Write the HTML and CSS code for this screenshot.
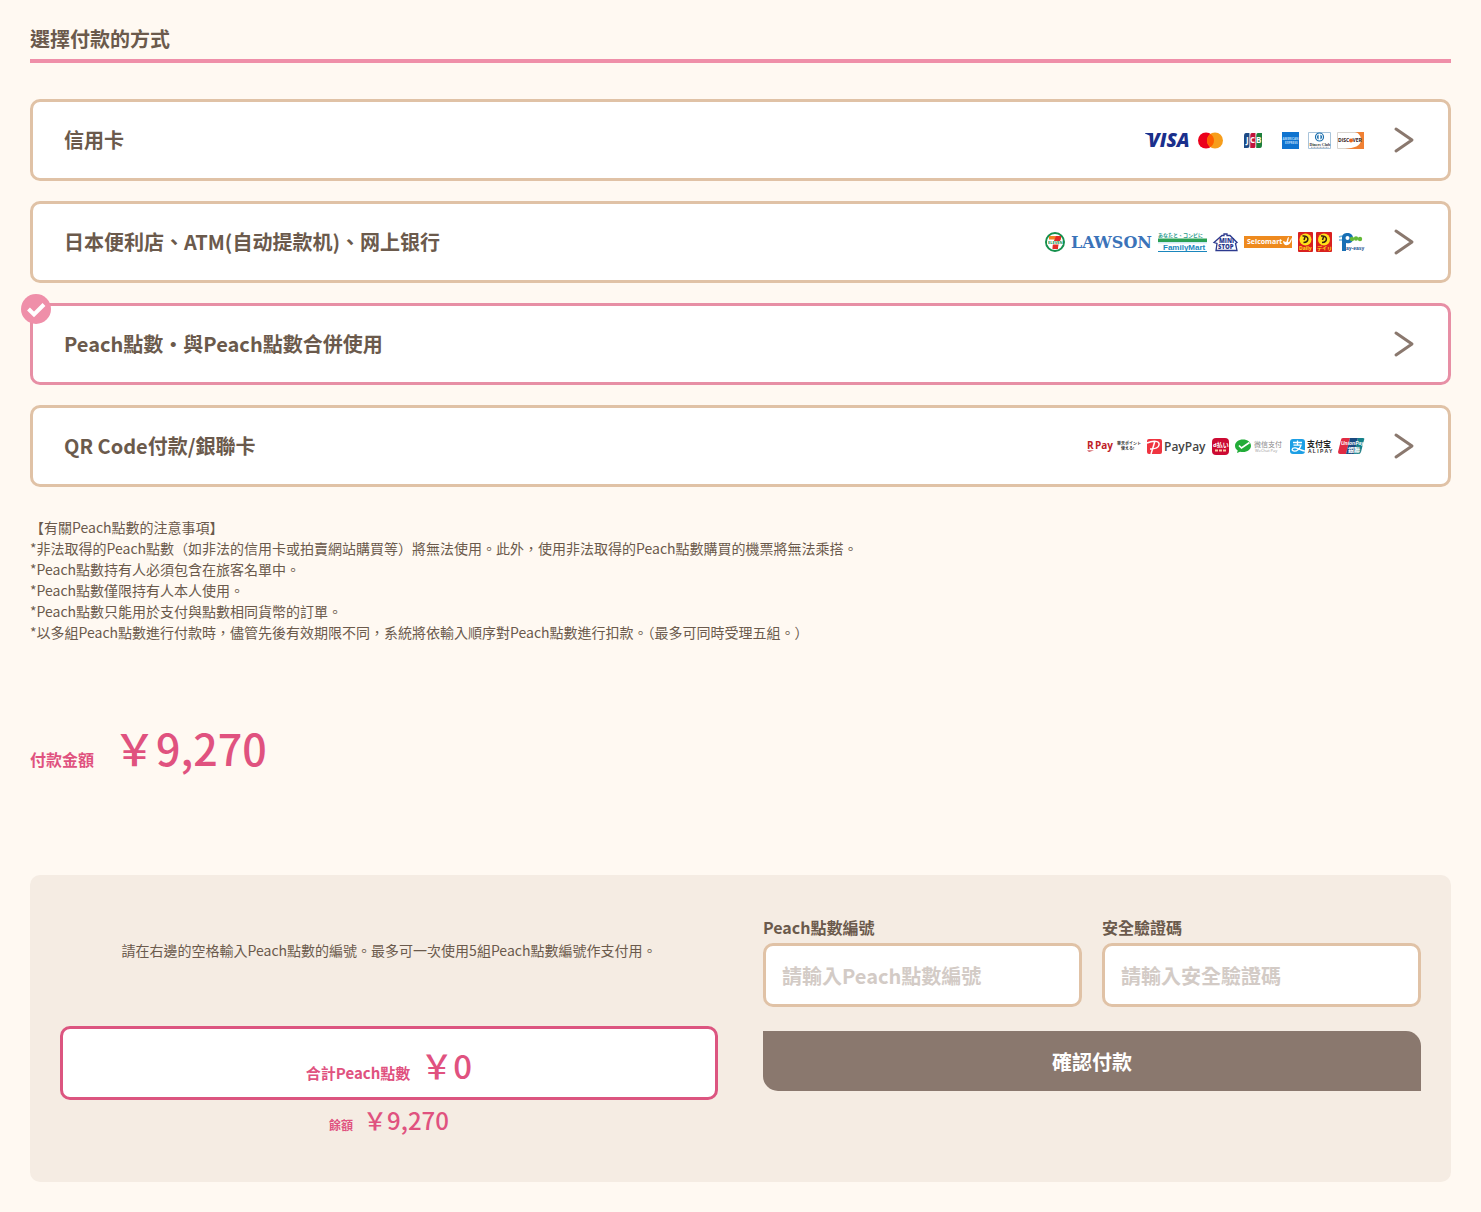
FILE: index.html
```html
<!DOCTYPE html>
<html lang="zh-Hant">
<head>
    <meta charset="UTF-8">
    <meta name="viewport" content="width=device-width, initial-scale=1.0">
    <title>選擇付款的方式</title>
    <link rel="stylesheet" href="styles.css">
</head>
<body>
    <main class="payment">
        <h1 class="page-title">選擇付款的方式</h1>

        <div class="methods">
            <button type="button" class="method">
                <span class="method-name">信用卡</span>
                <svg class="logos" width="219" height="20" viewBox="0 0 219 20" aria-hidden="true">
                    <!-- visa -->
                    <path d="M0 3h6q2 0 2 2v4Q5 5 0 3.600z" fill="#1a2f8c"/>
                    <text x="3" y="17" class="visa">VISA</text>
                    <!-- mastercard -->
                    <circle cx="61" cy="10.500" r="8" fill="#eb001b"/>
                    <circle cx="70" cy="10.500" r="8" fill="#f79e1b"/>
                    <path d="M65.500 3.900a8 8 0 0 1 0 13.200a8 8 0 0 1 0-13.200z" fill="#ff5f00"/>
                    <!-- jcb -->
                    <path d="M101 3h4v12q0 3-3 3h-3V6q0-3 2-3z" fill="#1d4a86"/>
                    <path d="M107 3h4v12q0 3-2 3h-4V6q0-3 2-3z" fill="#c0143c"/>
                    <path d="M113 3h4v12q0 3-2 3h-4V6q0-3 2-3z" fill="#1c7f3c"/>
                    <path d="M104.800 3v15M110.800 3v15" stroke="#fff" stroke-width=".8"/>
                    <text x="101" y="13" class="jcb">J</text>
                    <text x="105" y="13" class="jcb">C</text>
                    <text x="111" y="13" class="jcb">B</text>
                    <!-- amex -->
                    <path d="M137 2h17v17h-17z" fill="#0f73cf"/>
                    <text x="137.500" y="10" class="amex">AMERICAN</text>
                    <text x="140" y="13.500" class="amex">EXPRESS</text>
                    <!-- diners -->
                    <path d="M163.500 2.500h22v16h-22z" fill="#fff" stroke="#a9c4da"/>
                    <circle cx="174.500" cy="7" r="4" fill="#fff" stroke="#1a6fae" stroke-width="1.200"/>
                    <path d="M173.600 4.500a2.700 2.700 0 0 0 0 5zM175.400 4.500a2.700 2.700 0 0 1 0 5z" fill="#1a6fae"/>
                    <text x="164.500" y="15.500" class="diners">Diners Club</text>
                    <path d="M166 17.300h18" stroke="#667" stroke-width=".6" stroke-dasharray="1 .5"/>
                    <!-- discover -->
                    <path d="M192.500 2.500h26v16h-26z" fill="#fff" stroke="#d9d4cf"/>
                    <path d="M210 2h9v17h-19c9-1 16-3 16-9 0-4-2-7-6-8z" fill="#f08033"/>
                    <text x="193" y="12.400" class="discover">DISC</text>
                    <circle cx="206" cy="10.500" r="2" fill="#e9651b"/>
                    <text x="207.500" y="12.400" class="discover">VER</text>
                </svg>
                <svg class="arrow" width="20" height="28" viewBox="0 0 20 28" aria-hidden="true"><path d="M2 3l16 11L2 25"/></svg>
            </button>

            <button type="button" class="method">
                <span class="method-name">日本便利店、ATM(自动提款机)、网上银行</span>
                <svg class="logos" width="320" height="20" viewBox="0 0 320 20" aria-hidden="true">
                    <!-- seven eleven -->
                    <circle cx="11" cy="10" r="9" fill="#fff" stroke="#15904d" stroke-width="2"/>
                    <path d="M5 4h12v3.500H5z" fill="#f18121"/>
                    <path d="M12 4h5v1c0 4-3 6-3 12H8.500c0-6 2-9 3.500-13z" fill="#e32b26"/>
                    <path d="M3 9h16v3.500H3z" fill="#fff"/>
                    <text x="4" y="12.200" class="seven">ELEVEN</text>
                    <!-- lawson -->
                    <text x="27" y="16" class="lawson">LAWSON</text>
                    <!-- family mart -->
                    <text x="114" y="5" class="family-tag">あなたと、コンビに</text>
                    <path d="M114 6.500h49v3.500h-49z" fill="#2ba155"/>
                    <path d="M114 10h49v1.500h-49z" fill="#cfe9f5"/>
                    <text x="119" y="17.500" class="family">FamilyMart</text>
                    <path d="M114 19.500h49" stroke="#1a86bd"/>
                    <!-- ministop -->
                    <path d="M170 10.500l8-7h2V2h3v1.500h3l7 7-1.500 1 1.500 7h-21l1-7z" fill="#fff" stroke="#2c3a8e" stroke-width="1.300"/>
                    <text x="175" y="11" class="mini">MINI</text>
                    <text x="174" y="17" class="mini">STOP</text>
                    <!-- seicomart -->
                    <path d="M200 4h48v12h-48z" fill="#ee8a1e"/>
                    <text x="203" y="12" class="seico">Seicomart</text>
                    <path d="M239 9c0 6 8 6 9-3-2 1-2 5-4 4l1-5c-2 0-2 5-3 5z" fill="#fff"/>
                    <!-- daily -->
                    <rect x="254" y="0" width="15" height="20" rx="1" fill="#d9201f"/>
                    <rect x="272" y="0" width="16" height="20" rx="1" fill="#d9201f"/>
                    <circle cx="261.500" cy="7.500" r="6" fill="#ffe11a"/>
                    <circle cx="280" cy="7.500" r="6" fill="#ffe11a"/>
                    <path d="M258.500 4c7-1 7 6 1 6.500M261 5l-1 3M277 4c7-1 7 6 1 6.500M279.500 5l-1 3" fill="none" stroke="#35200f" stroke-width="1.500"/>
                    <text x="255" y="18" class="daily">Daily</text>
                    <text x="273" y="18" class="daily">デイリ</text>
                    <!-- pay-easy -->
                    <path d="M298 19V5c0-5 11-6 11 1 0 5-4 6-7 5v8z" fill="#176fb5"/>
                    <circle cx="303.500" cy="6" r="2" fill="#fff"/>
                    <path d="M295 5l3-1M295 8h3" stroke="#73b9df" stroke-width="1.500"/>
                    <circle cx="308" cy="7" r="2.200" fill="#64b937"/>
                    <circle cx="312" cy="6.500" r="2.200" fill="#64b937"/>
                    <circle cx="316" cy="7" r="2.200" fill="#64b937"/>
                    <text x="302" y="17.500" class="payeasy">ay-easy</text>
                </svg>
                <svg class="arrow" width="20" height="28" viewBox="0 0 20 28" aria-hidden="true"><path d="M2 3l16 11L2 25"/></svg>
            </button>

            <button type="button" class="method selected" aria-pressed="true">
                <svg class="check" width="30" height="30" viewBox="0 0 30 30" aria-hidden="true">
                    <circle cx="15" cy="15" r="15" fill="#ef8fa9"/>
                    <path d="M7.500 15l5.500 5.500 10-10" fill="none" stroke="#fff" stroke-width="4"/>
                </svg>
                <span class="method-name">Peach點數・與Peach點數合併使用</span>
                <svg class="arrow" width="20" height="28" viewBox="0 0 20 28" aria-hidden="true"><path d="M2 3l16 11L2 25"/></svg>
            </button>

            <button type="button" class="method">
                <span class="method-name">QR Code付款/銀聯卡</span>
                <svg class="logos" width="278" height="20" viewBox="0 0 278 20" aria-hidden="true">
                    <!-- rakuten pay -->
                    <text x="1" y="13" class="rpay">R</text>
                    <path d="M1 14.500h7l-5 1.200z" fill="#bf1d27"/>
                    <text x="9" y="13" class="rpay">Pay</text>
                    <text x="31" y="9" class="rpoint">楽天ポイント</text>
                    <text x="35" y="14" class="rpoint">使える!</text>
                    <!-- paypay -->
                    <rect x="61" y="3" width="15" height="15" rx="2" fill="#ef3440"/>
                    <path d="M61 7c7-3 13-2 12 2-.5 3-5 4-9 4M69 5l-4 13" fill="none" stroke="#fff" stroke-width="1.500"/>
                    <text x="78" y="15" class="paypay">PayPay</text>
                    <!-- d barai -->
                    <rect x="126" y="2" width="17" height="17" rx="4" fill="#cc0a33"/>
                    <text x="127" y="11" class="dbarai">d払い</text>
                    <path d="M129 14.500h3M133 14.500h3M137 14.500h3" stroke="#ffc9a5" stroke-width="2"/>
                    <!-- wechat pay -->
                    <path d="M157 3.500c4.500 0 8 2.700 8 6.300s-3.500 6.300-8 6.300c-1 0-2 0-3-.4L151 17l.7-2.400c-1.700-1.200-2.700-2.900-2.700-4.800 0-3.600 3.500-6.300 8-6.300z" fill="#22ac38"/>
                    <path d="M153 9.500l2.500 2.500 8-5.500" fill="none" stroke="#fff" stroke-width="1.700"/>
                    <text x="168" y="11" class="wechat">微信支付</text>
                    <text x="169" y="16" class="wechat-sub">WeChat Pay</text>
                    <!-- alipay -->
                    <rect x="204" y="3" width="15" height="15" rx="3" fill="#1c9fe5"/>
                    <path d="M207 6.500h9M211.500 4.500v4.500M207.500 9.200h7.500c-1 3.500-4 6-6.500 6-3.500 0-3-4 1-3.300 2.500.4 5 2 9.500 3.300" fill="none" stroke="#fff" stroke-width="1.300"/>
                    <text x="221" y="10.500" class="alipay">支付宝</text>
                    <text x="222" y="17" class="alipay-sub">A L I P A Y</text>
                    <!-- unionpay -->
                    <path d="M257 2h7l-4 16h-6q-2 0-2-2l3-12q0-2 2-2z" fill="#e02b43"/>
                    <path d="M264 2h8l-4 16h-8z" fill="#1b4a80"/>
                    <path d="M272 2h5q2 0 1 2l-3 12q-1 2-2 2h-5z" fill="#16818a"/>
                    <text x="255" y="9" class="union">UnionPay</text>
                    <text x="262" y="15.500" class="union-cn">銀聯</text>
                </svg>
                <svg class="arrow" width="20" height="28" viewBox="0 0 20 28" aria-hidden="true"><path d="M2 3l16 11L2 25"/></svg>
            </button>
        </div>

        <div class="notes">
            <p>【有關Peach點數的注意事項】</p>
            <p>*非法取得的Peach點數（如非法的信用卡或拍賣網站購買等）將無法使用。此外，使用非法取得的Peach點數購買的機票將無法乘搭。</p>
            <p>*Peach點數持有人必須包含在旅客名單中。</p>
            <p>*Peach點數僅限持有人本人使用。</p>
            <p>*Peach點數只能用於支付與點數相同貨幣的訂單。</p>
            <p>*以多組Peach點數進行付款時，儘管先後有效期限不同，系統將依輸入順序對Peach點數進行扣款。（最多可同時受理五組。）</p>
        </div>

        <div class="amount">
            <span class="amount-label">付款金額</span>
            <span class="amount-value">￥9,270</span>
        </div>

        <form class="panel">
            <div class="summary">
                <p class="guide">請在右邊的空格輸入Peach點數的編號。最多可一次使用5組Peach點數編號作支付用。</p>
                <div class="total">
                    <span class="total-label">合計Peach點數</span>
                    <span class="total-value">￥0</span>
                </div>
                <div class="balance">
                    <span class="balance-label">餘額</span>
                    <span class="balance-value">￥9,270</span>
                </div>
            </div>
            <div class="entry">
                <div class="fields">
                    <div class="field">
                        <label for="pointCode">Peach點數編號</label>
                        <input type="text" id="pointCode" placeholder="請輸入Peach點數編號">
                    </div>
                    <div class="field">
                        <label for="securityCode">安全驗證碼</label>
                        <input type="text" id="securityCode" placeholder="請輸入安全驗證碼">
                    </div>
                </div>
                <button type="button" class="submit">確認付款</button>
            </div>
        </form>
    </main>
</body>
</html>
```
FILE: styles.css
```css
* {
    box-sizing: border-box;
}

body {
    margin: 0;
    background: #fff9f2;
    color: #6b5a4c;
    font-family: "Noto Sans CJK TC", sans-serif;
    font-size: 14px;
    line-height: 21px;
}

p {
    margin: 0;
}

button,
input {
    font-family: inherit;
}

.payment {
    padding: 24px 30px 30px;
}

.page-title {
    margin: 0 0 36px;
    padding-bottom: 5px;
    border-bottom: 4px solid #ef8fa9;
    font-size: 20px;
    font-weight: 700;
    line-height: 30px;
}

/* payment methods */
.methods {
    display: flex;
    flex-direction: column;
    gap: 20px;
}

.method {
    position: relative;
    display: flex;
    align-items: center;
    gap: 30px;
    width: 100%;
    min-height: 82px;
    padding: 0 34px 0 31px;
    background: #fff;
    border: 3px solid #e0c2a6;
    border-radius: 10px;
    color: inherit;
    text-align: left;
    cursor: pointer;
}

.method.selected {
    border-color: #e78fa5;
}

.method-name {
    flex: 1;
    font-size: 20px;
    font-weight: 700;
    line-height: 30px;
}

.check {
    position: absolute;
    top: -12px;
    left: -12px;
}

.logos,
.arrow {
    flex: none;
    overflow: visible;
}

.arrow path {
    fill: none;
    stroke: #8a786e;
    stroke-width: 3;
    stroke-linecap: round;
    stroke-linejoin: round;
}

/* notes */
.notes {
    margin-top: 30px;
}

/* amount */
.amount {
    display: flex;
    align-items: baseline;
    gap: 19px;
    margin-top: 72px;
    color: #e0527f;
    font-weight: 700;
}

.amount-label {
    font-size: 16px;
}

.amount-value {
    font-size: 43px;
    font-weight: 500;
    line-height: 64px;
}

/* point panel */
.panel {
    display: grid;
    grid-template-columns: 1fr 1fr;
    gap: 45px;
    margin-top: 96px;
    padding: 40px 30px 43px;
    background: #f5ece3;
    border-radius: 10px;
}

.guide {
    padding: 25px 0 65px;
    text-align: center;
}

.total,
.balance {
    display: flex;
    justify-content: center;
    align-items: baseline;
    gap: 10px;
    color: #e0527f;
    font-weight: 700;
}

.total {
    height: 74px;
    padding-top: 10px;
    background: #fff;
    border: 3px solid #dc5580;
    border-radius: 10px;
}

.total-label {
    font-size: 15px;
}

.total-value {
    font-size: 33px;
    font-weight: 500;
    line-height: 52px;
}

.balance {
    margin-top: 1px;
}

.balance-label {
    font-size: 12px;
}

.balance-value {
    font-size: 24px;
    font-weight: 500;
    line-height: 38px;
}

.fields {
    display: flex;
    gap: 20px;
}

.field {
    flex: 1;
}

.field label {
    display: block;
    margin-bottom: 4px;
    font-size: 16px;
    font-weight: 700;
    line-height: 24px;
}

.field input {
    display: block;
    width: 100%;
    height: 64px;
    padding: 0 16px;
    background: #fff;
    border: 3px solid #e0c2a6;
    border-radius: 10px;
    color: #6b5a4c;
    font-size: 20px;
    font-weight: 700;
}

.field input::placeholder {
    color: #d3cbc6;
    opacity: 1;
}

.submit {
    width: 100%;
    height: 60px;
    margin-top: 24px;
    background: #8a786e;
    border: none;
    border-radius: 0 15px 0 15px;
    color: #fff;
    font-size: 20px;
    font-weight: 700;
    cursor: pointer;
}

/* brand lettering */
.logos text {
    font-family: "Open Sans", "Noto Sans CJK JP", sans-serif;
    font-weight: 700;
}

.logos .visa {
    fill: #1a2f8c;
    font-size: 19px;
    font-style: italic;
    font-weight: 800;
}

.logos .jcb {
    fill: #fff;
    font-size: 8px;
}

.logos .amex {
    fill: #b5dcfa;
    font-size: 3px;
}

.logos .diners {
    fill: #333;
    font-family: "Liberation Serif", serif;
    font-size: 4px;
}

.logos .discover {
    fill: #33221c;
    font-size: 5px;
}

.logos .seven {
    fill: #15904d;
    font-size: 4px;
}

.logos .lawson {
    fill: #3b73b9;
    font-family: "DejaVu Serif", serif;
    font-size: 16px;
}

.logos .family-tag {
    fill: #2a9a8c;
    font-size: 5px;
}

.logos .family {
    fill: #1a86bd;
    font-family: "Liberation Sans", sans-serif;
    font-size: 8px;
}

.logos .mini {
    fill: #2c3a8e;
    font-size: 6px;
    font-weight: 800;
}

.logos .seico {
    fill: #fff;
    font-size: 7px;
}

.logos .daily {
    fill: #ffe11a;
    font-size: 5px;
}

.logos .payeasy {
    fill: #17508f;
    font-family: "Liberation Sans", sans-serif;
    font-size: 5px;
}

.logos .rpay {
    fill: #bf1d27;
    font-size: 10px;
}

.logos .rpoint {
    fill: #333;
    font-size: 4px;
}

.logos .paypay {
    fill: #444;
    font-size: 12px;
    font-weight: 600;
}

.logos .dbarai {
    fill: #fff;
    font-size: 6px;
}

.logos .wechat {
    fill: #888;
    font-size: 7px;
    font-weight: 400;
}

.logos .wechat-sub {
    fill: #999;
    font-size: 4px;
    font-weight: 400;
}

.logos .alipay {
    fill: #222;
    font-size: 8px;
}

.logos .alipay-sub {
    fill: #333;
    font-family: "Liberation Sans", sans-serif;
    font-size: 5px;
}

.logos .union {
    fill: #fff;
    font-family: "Liberation Sans", sans-serif;
    font-size: 5px;
    font-style: italic;
}

.logos .union-cn {
    fill: #fff;
    font-size: 6px;
}
```
